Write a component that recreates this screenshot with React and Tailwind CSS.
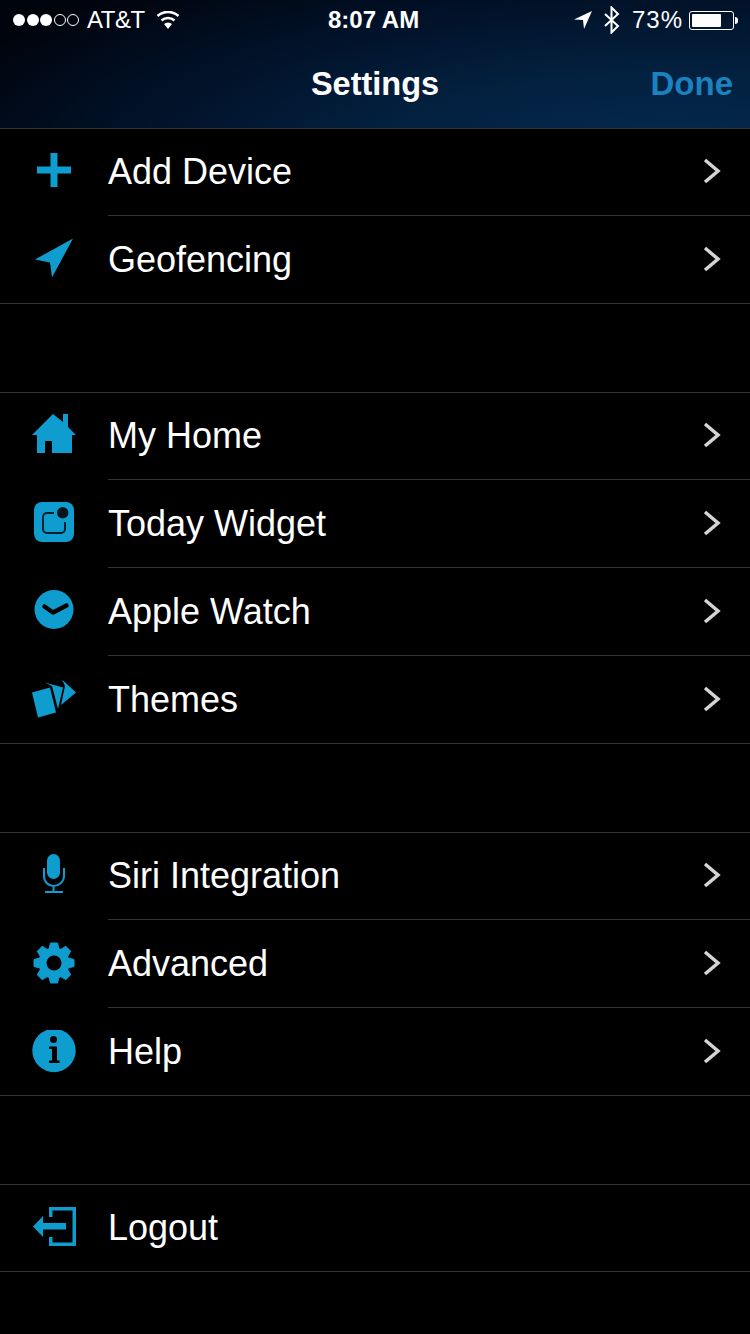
import React from 'react';

const BLUE = '#0f9ccf';

const PlusIcon = () => (
  <svg width="44" height="44" viewBox="0 0 44 44">
    <path d="M18.500 3h7v13.500H39v7H25.500V37h-7V23.500H5v-7h13.500z" fill={BLUE} />
  </svg>
);

const GeoIcon = () => (
  <svg width="44" height="44" viewBox="0 0 44 44">
    <path d="M41 .5 3 21.500l15 3 2 15z" fill={BLUE} />
  </svg>
);

const HomeIcon = () => (
  <svg width="44" height="44" viewBox="0 0 44 44">
    <path d="M21 0l10 8V0h5v13l8 8h-4v18H20V27h-7v12H5V21H0z" fill={BLUE} />
  </svg>
);

const WidgetIcon = () => (
  <svg width="44" height="44" viewBox="0 0 44 44">
    <rect x="2" y="0" width="40" height="40" rx="8" fill={BLUE} />
    <path d="M22 11h-7a4 4 0 0 0-4 4v12a4 4 0 0 0 4 4h14a4 4 0 0 0 4-4v-7" fill="none" stroke="#04202c" strokeWidth="2" />
    <circle cx="30.700" cy="10.700" r="5.700" fill="#04141c" />
  </svg>
);

const WatchIcon = () => (
  <svg width="44" height="44" viewBox="0 0 44 44">
    <circle cx="22" cy="19.500" r="19.500" fill={BLUE} />
    <path d="M12.500 16.500l8.500 6 13.500-7" fill="none" stroke="#000" strokeWidth="4.500" strokeLinecap="round" strokeLinejoin="round" />
  </svg>
);

const ThemesIcon = () => (
  <svg width="44" height="44" viewBox="0 0 44 44">
    <path d="M0 14.500 18 9.500l6 25-18 5z" fill={BLUE} />
    <path d="M13 4.500l18 5-5 21.500-6-23z" fill={BLUE} />
    <path d="M30 1.500l14 13-15 12.500 4-19z" fill={BLUE} />
  </svg>
);

const MicIcon = () => (
  <svg width="44" height="44" viewBox="0 0 44 44">
    <rect x="15" y="0" width="13" height="25" rx="6.500" fill={BLUE} />
    <path d="M12 14v8c0 6 4.500 10 9.500 10s10.500-4 10.500-10v-8M21.500 32v6M13 38h18" fill="none" stroke={BLUE} strokeWidth="2" />
  </svg>
);

const GearIcon = () => {
  const teeth = [0, 45, 90, 135, 180, 225, 270, 315];
  return (
    <svg width="44" height="44" viewBox="0 0 44 44">
      {teeth.map((a) => (
        <path key={a} d="M18.500 1h7l2 8h-11z" fill={BLUE} stroke={BLUE} strokeWidth="1" strokeLinejoin="round" transform={`rotate(${a} 22 21)`} />
      ))}
      <circle cx="22" cy="21" r="15.500" fill={BLUE} />
      <circle cx="22" cy="21" r="7.500" fill="#000" />
    </svg>
  );
};

const InfoIcon = () => (
  <svg width="44" height="44" viewBox="0 0 44 44">
    <circle cx="22" cy="20.500" r="21.700" fill={BLUE} />
    <circle cx="21.500" cy="9.500" r="3.500" fill="#000" />
    <path d="M17 16.500h8v14h2.500v2.500H17v-2.500h3V19h-3z" fill="#000" />
  </svg>
);

const LogoutIcon = () => (
  <svg width="44" height="44" viewBox="0 0 44 44">
    <path d="M18.750 11V2.750h23.500v35.500h-23.500V31" fill="none" stroke={BLUE} strokeWidth="3.500" />
    <path d="M1 20.500 11 10v7h23v6.500H11v7.500z" fill={BLUE} />
  </svg>
);

const Chevron = () => (
  <svg className="-mt-[2px]" width="18" height="26" viewBox="0 0 18 26">
    <path d="M2 2l13 11L2 24" fill="none" stroke="#d4d4d4" strokeWidth="3.500" />
  </svg>
);

const Row = ({ icon, label, first, chevron = true }) => (
  <div className={`flex items-center ${first ? 'h-[86px]' : 'h-[87px]'}`}>
    <div className="w-[108px] shrink-0 flex justify-center pr-[1px]">{icon}</div>
    <span className="flex-1 text-[36px] leading-none text-white">{label}</span>
    {chevron && <div className="pr-[29px] flex"><Chevron /></div>}
  </div>
);

const Group = ({ items }) => (
  <div className="border-t border-b border-[#333]">
    {items.map((item, i) => (
      <React.Fragment key={item.label}>
        {i > 0 && <div className="ml-[108px] h-px bg-[#333]" />}
        <Row {...item} first={i === 0} />
      </React.Fragment>
    ))}
  </div>
);

const App = () => {
  return (
    <div className="w-[750px] h-[1334px] bg-black overflow-hidden font-['Liberation_Sans',sans-serif]">
      {/* Header */}
      <div className="h-[128px] bg-[radial-gradient(ellipse_800px_240px_at_90%_130%,#052c52_0%,#03203f_40%,#010f24_75%,#00040c_100%)]">
        <div className="h-[40px] flex items-center justify-between text-white text-[24px] leading-none relative">
          <div className="flex items-center pl-[13px]">
            <div className="flex gap-[1.500px]">
              {[0, 1, 2].map((i) => <span key={i} className="w-[12px] h-[12px] rounded-full bg-white" />)}
              {[0, 1].map((i) => <span key={i} className="w-[12px] h-[12px] rounded-full border border-white" />)}
            </div>
            <span className="ml-[8px] tracking-[-0.5px]">AT&amp;T</span>
            <svg className="ml-[11px]" width="24" height="18" viewBox="0 0 24 18">
              <path d="M12 18 8 13a6 6 0 0 1 8 0z" fill="#fff" />
              <path d="M5.500 9.500a9.500 9.500 0 0 1 13 0M1.500 5a15.500 15.500 0 0 1 21 0" fill="none" stroke="#fff" strokeWidth="2.500" />
            </svg>
          </div>
          <span className="absolute left-[328px] font-semibold">8:07 AM</span>
          <div className="flex items-center pr-[12px]">
            <svg width="18" height="18" viewBox="0 0 18 18">
              <path d="M18 0 0 8.500l9 .5 1 9z" fill="#fff" />
            </svg>
            <svg className="ml-[11px]" width="17" height="28" viewBox="0 0 17 28">
              <path d="M2 8l13 12-6.500 6.500v-25L15 8 2 20" fill="none" stroke="#fff" strokeWidth="2" />
            </svg>
            <span className="ml-[12px] tracking-[1px]">73%</span>
            <div className="ml-[6px] w-[45px] h-[19px] border border-white rounded-[3px] p-[2px]">
              <div className="h-full w-[29px] bg-white rounded-[1px]" />
            </div>
            <div className="ml-[1px] w-[3px] h-[7px] bg-white rounded-r-full" />
          </div>
        </div>
        <div className="relative h-[88px] flex items-center justify-center">
          <span className="text-[32.500px] font-semibold text-white leading-none">Settings</span>
          <span className="absolute right-[17px] top-[27px] text-[33px] font-semibold text-[#1a83bf] leading-none">Done</span>
        </div>
      </div>

      {/* Lists */}
      <Group items={[
        { icon: <PlusIcon />, label: 'Add Device' },
        { icon: <GeoIcon />, label: 'Geofencing' },
      ]} />
      <div className="h-[88px]" />
      <Group items={[
        { icon: <HomeIcon />, label: 'My Home' },
        { icon: <WidgetIcon />, label: 'Today Widget' },
        { icon: <WatchIcon />, label: 'Apple Watch' },
        { icon: <ThemesIcon />, label: 'Themes' },
      ]} />
      <div className="h-[88px]" />
      <Group items={[
        { icon: <MicIcon />, label: 'Siri Integration' },
        { icon: <GearIcon />, label: 'Advanced' },
        { icon: <InfoIcon />, label: 'Help' },
      ]} />
      <div className="h-[88px]" />
      <Group items={[{ icon: <LogoutIcon />, label: 'Logout', chevron: false }]} />
    </div>
  );
};

export default App;
